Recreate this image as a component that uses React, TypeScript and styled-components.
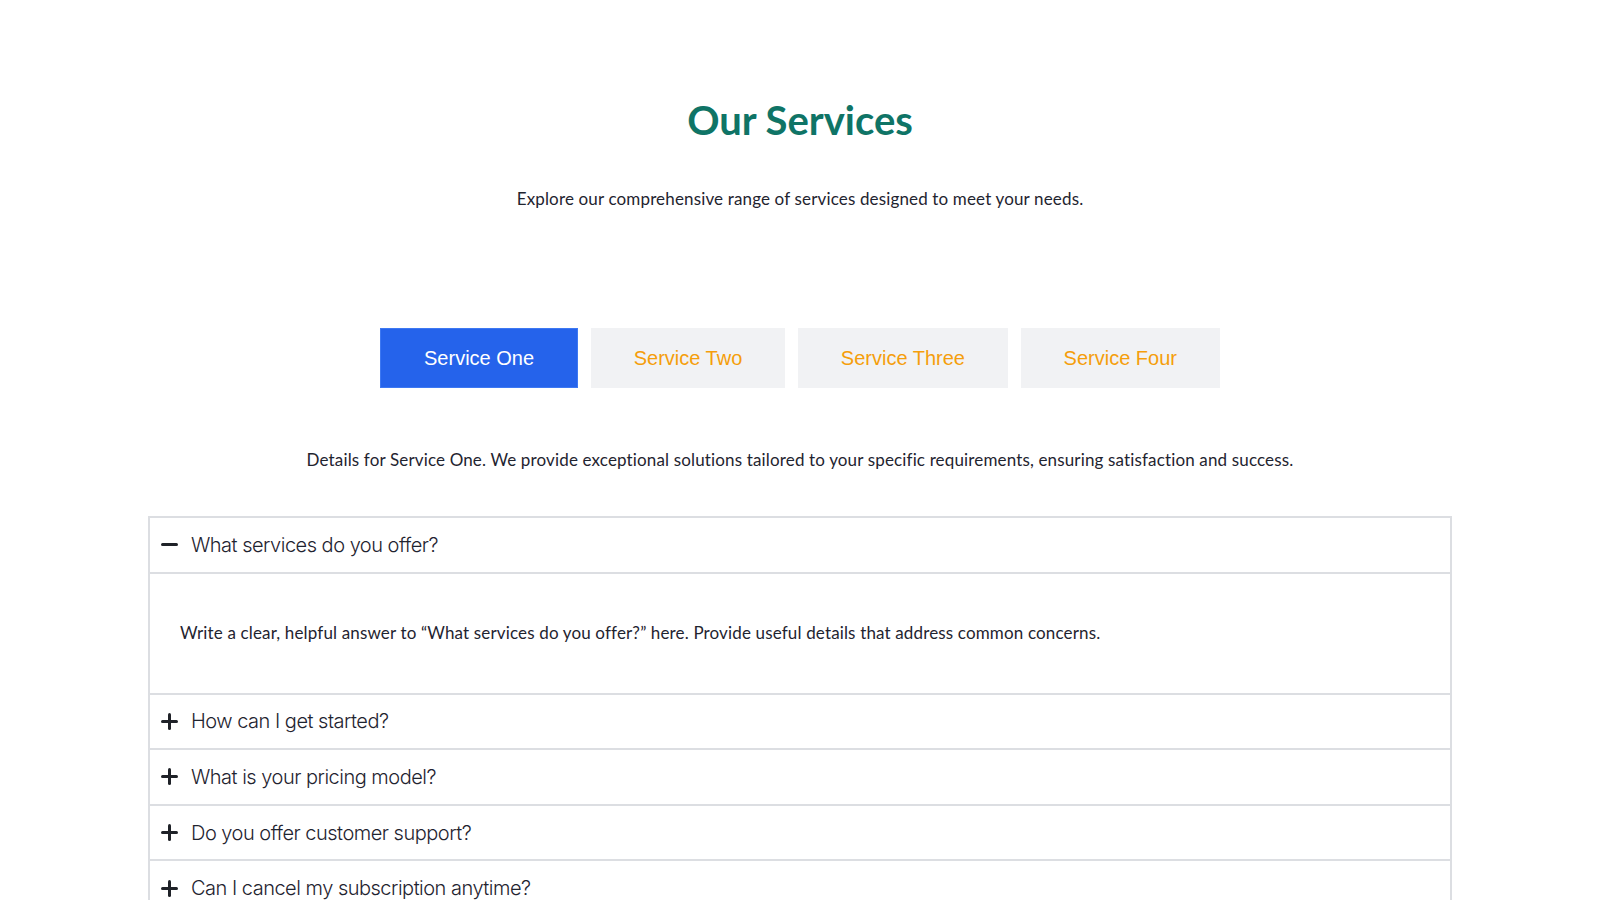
import React, { FC, useState } from 'react';
import styled, { createGlobalStyle } from 'styled-components';

const GlobalStyle = createGlobalStyle`
  html, body {
    margin: 0;
    padding: 0;
    background: #ffffff;
  }
  body {
    font-family: Lato, "Noto Sans", sans-serif;
    color: #1f2430;
  }
  * {
    box-sizing: border-box;
  }
`;

const SPage = styled.main`
  width: 1600px;
  padding: 96px 148px 60px;
  display: flex;
  flex-direction: column;
  align-items: center;
`;

const STitle = styled.h1`
  margin: 0;
  font-family: Lato, sans-serif;
  font-size: 40px;
  line-height: 48px;
  font-weight: 700;
  color: #0f7466;
`;

const SBodyText = styled.p`
  font-size: 17px;
  line-height: 24px;
  letter-spacing: 0.15px;
  color: #1f2430;
  text-align: center;
`;

const SSubtitle = styled(SBodyText)`
  margin: 43px 0 0;
`;

const STabs = styled.div`
  margin-top: 117px;
  display: flex;
  gap: 12.6px;
`;

const STab = styled.button<{ $active?: boolean }>`
  height: 60px;
  padding: 0 43px;
  border: ${({ $active }) => ($active ? '1px solid #3d78f2' : 'none')};
  background: ${({ $active }) => ($active ? '#2563eb' : '#f1f2f4')};
  color: ${({ $active }) => ($active ? '#ffffff' : '#f59e0b')};
  font-family: 'Liberation Sans', Arial, sans-serif;
  font-size: 20px;
  cursor: pointer;
`;

const SDetails = styled(SBodyText)`
  margin: 60px 0 0;
`;

const SAccordion = styled.div`
  margin-top: 44px;
  width: 100%;
  border: 2px solid #dcdee2;
  border-bottom: none;
`;

const SItem = styled.div`
  border-bottom: 2px solid #dcdee2;
`;

const SHeader = styled.button`
  width: 100%;
  height: 53.6px;
  display: flex;
  align-items: center;
  gap: 13px;
  padding: 0 11px;
  border: none;
  background: #ffffff;
  text-align: left;
  cursor: pointer;
  font-family: Inter, sans-serif;
  font-weight: 300;
  font-size: 20px;
  letter-spacing: -0.5px;
  color: #1f2430;
`;

const SPanel = styled.div`
  border-top: 2px solid #dcdee2;
  padding: 47.5px 30px;
  font-size: 17px;
  line-height: 24px;
  letter-spacing: 0.15px;
  color: #1f2430;
`;

const SIcon = styled.svg`
  flex: none;
  width: 17px;
  height: 17px;
`;

const ToggleIcon: FC<{ open: boolean }> = ({ open }) => (
  <SIcon viewBox="0 0 17 17" fill="none" stroke="#1f2228" strokeWidth="3" strokeLinecap="round">
    <path d="M1.5 8.5h14" />
    {!open && <path d="M8.5 1.5v14" />}
  </SIcon>
);

const services = ['Service One', 'Service Two', 'Service Three', 'Service Four'];

const faqs = [
  'What services do you offer?',
  'How can I get started?',
  'What is your pricing model?',
  'Do you offer customer support?',
  'Can I cancel my subscription anytime?',
];

const App: FC = () => {
  const [active, setActive] = useState(0);
  const [open, setOpen] = useState(0);

  return (
    <>
      <GlobalStyle />
      <SPage>
        <STitle>Our Services</STitle>
        <SSubtitle>Explore our comprehensive range of services designed to meet your needs.</SSubtitle>
        <STabs>
          {services.map((s, i) => (
            <STab key={s} $active={i === active} onClick={() => setActive(i)}>
              {s}
            </STab>
          ))}
        </STabs>
        <SDetails>
          Details for {services[active]}. We provide exceptional solutions tailored to your specific requirements,
          ensuring satisfaction and success.
        </SDetails>
        <SAccordion>
          {faqs.map((q, i) => (
            <SItem key={q}>
              <SHeader onClick={() => setOpen(open === i ? -1 : i)}>
                <ToggleIcon open={open === i} />
                {q}
              </SHeader>
              {open === i && (
                <SPanel>
                  Write a clear, helpful answer to “{q}” here. Provide useful details that address common concerns.
                </SPanel>
              )}
            </SItem>
          ))}
        </SAccordion>
      </SPage>
    </>
  );
};

export default App;
